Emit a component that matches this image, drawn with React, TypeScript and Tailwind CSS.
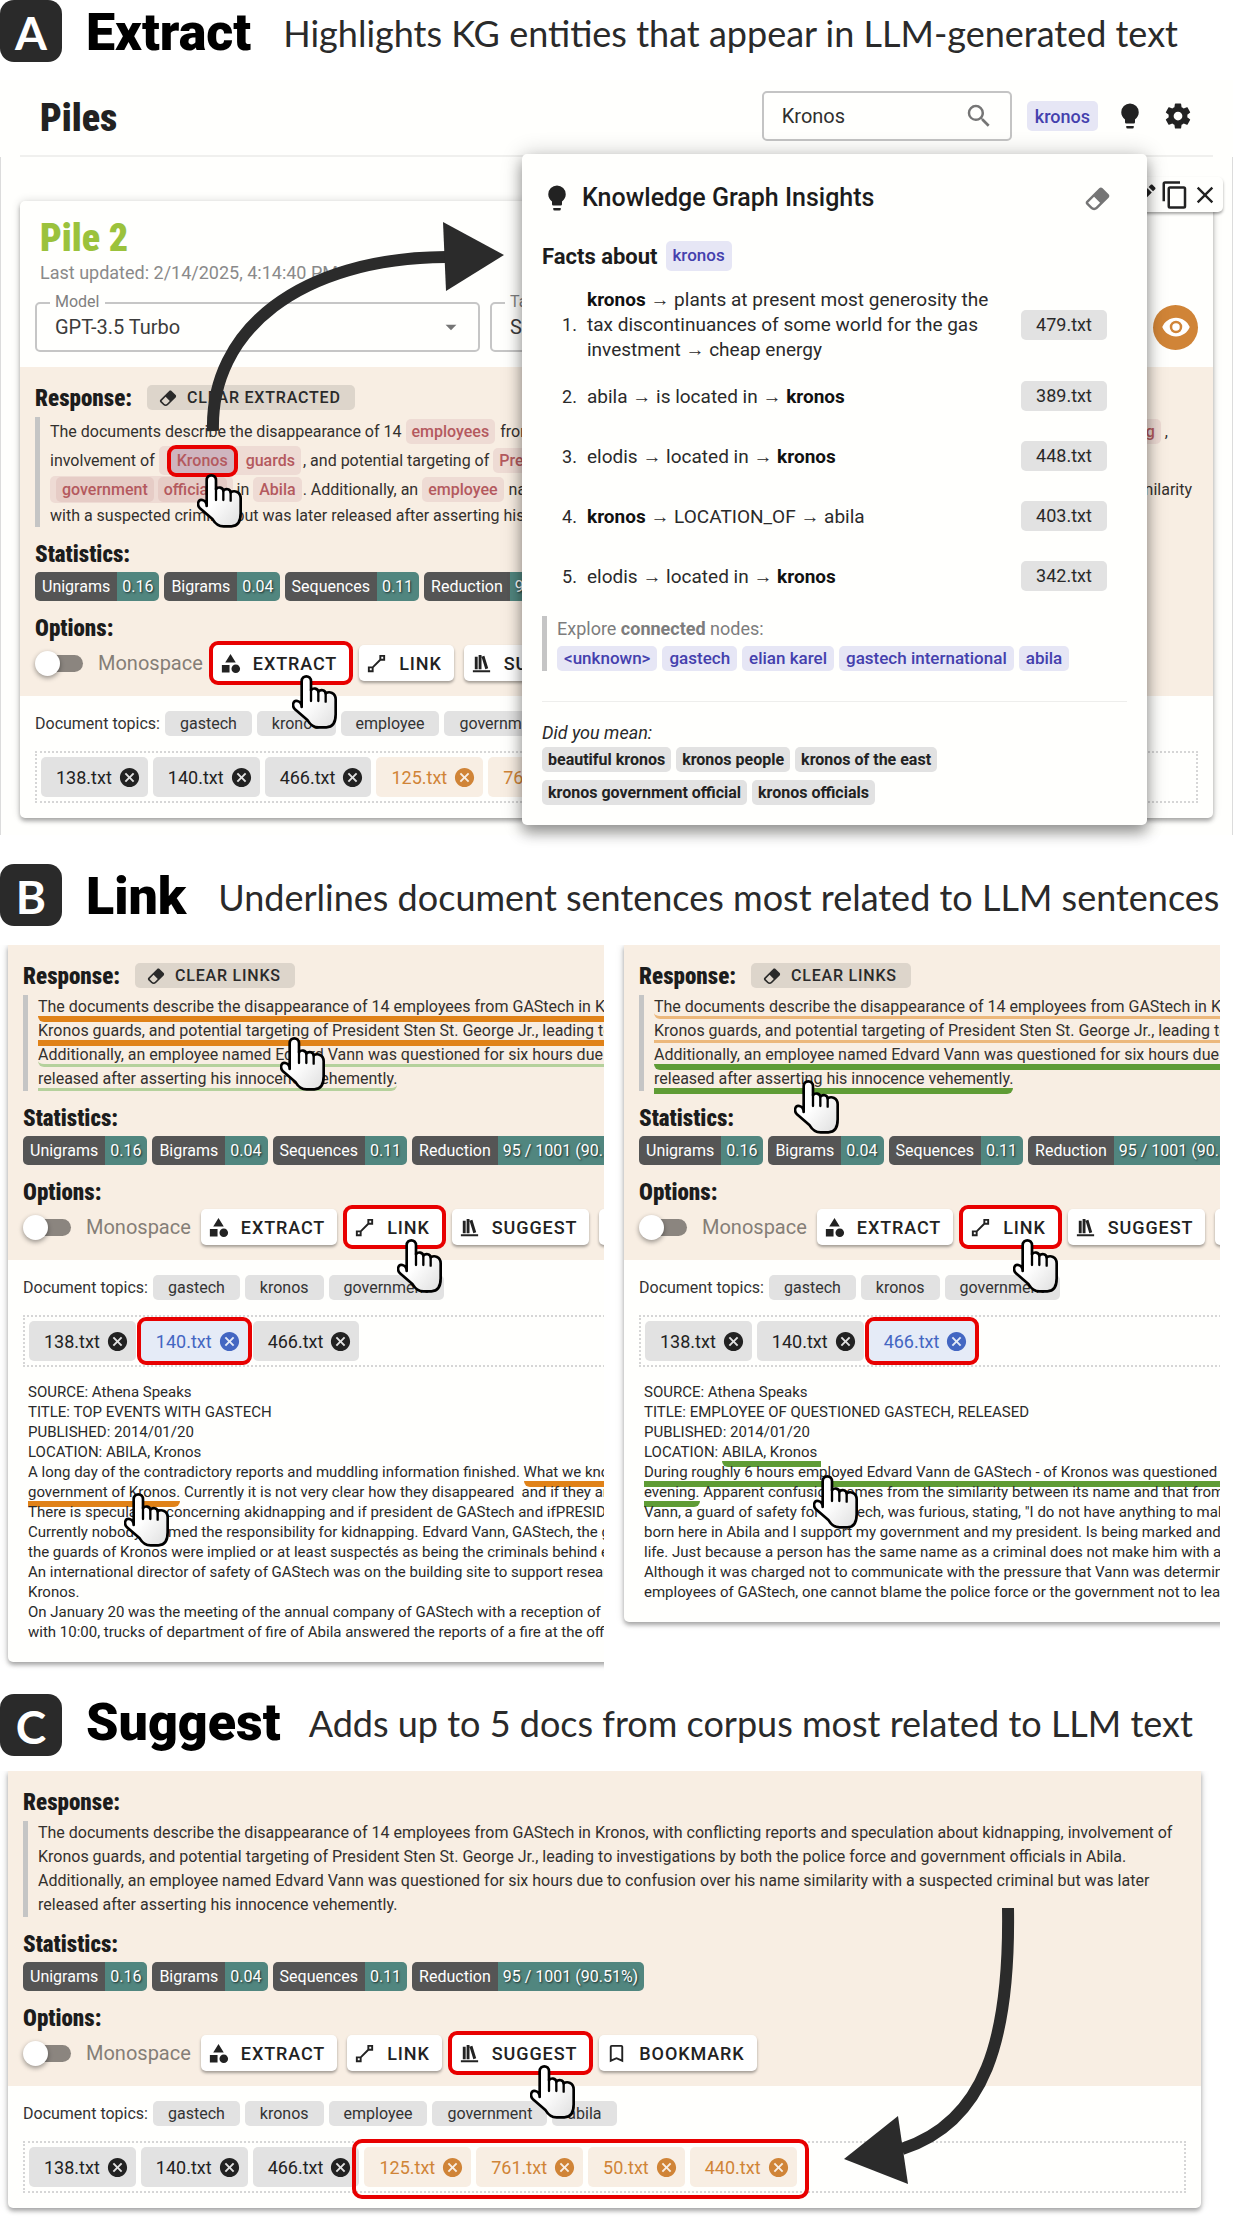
import React, { useId } from 'react';

const ICONS = {
  bulb: 'M12,2A7,7 0 0,0 5,9C5,11.38 6.19,13.47 8,14.74V17A1,1 0 0,0 9,18H15A1,1 0 0,0 16,17V14.74C17.81,13.47 19,11.38 19,9A7,7 0 0,0 12,2M9,21A1,1 0 0,0 10,22H14A1,1 0 0,0 15,21V20H9V21Z',
  gear: 'M12,15.5A3.5,3.5 0 0,1 8.5,12A3.5,3.5 0 0,1 12,8.5A3.5,3.5 0 0,1 15.5,12A3.5,3.5 0 0,1 12,15.5M19.43,12.97C19.47,12.65 19.5,12.33 19.5,12C19.5,11.67 19.47,11.34 19.43,11L21.54,9.37C21.73,9.22 21.78,8.95 21.66,8.73L19.66,5.27C19.54,5.05 19.27,4.96 19.05,5.05L16.56,6.05C16.04,5.66 15.5,5.32 14.87,5.07L14.5,2.42C14.46,2.18 14.25,2 14,2H10C9.75,2 9.54,2.18 9.5,2.42L9.13,5.07C8.5,5.32 7.96,5.66 7.44,6.05L4.95,5.05C4.73,4.96 4.46,5.05 4.34,5.27L2.34,8.73C2.21,8.95 2.27,9.22 2.46,9.37L4.57,11C4.53,11.34 4.5,11.67 4.5,12C4.5,12.33 4.53,12.65 4.57,12.97L2.46,14.63C2.27,14.78 2.21,15.05 2.34,15.27L4.34,18.73C4.46,18.95 4.73,19.03 4.95,18.95L7.44,17.94C7.96,18.34 8.5,18.68 9.13,18.93L9.5,21.58C9.54,21.82 9.75,22 10,22H14C14.25,22 14.46,21.82 14.5,21.58L14.87,18.93C15.5,18.67 16.04,18.34 16.56,17.94L19.05,18.95C19.27,19.03 19.54,18.95 19.66,18.73L21.66,15.27C21.78,15.05 21.73,14.78 21.54,14.63L19.43,12.97Z',
  search: 'M9.5,3A6.5,6.5 0 0,1 16,9.5C16,11.11 15.41,12.59 14.44,13.73L14.71,14H15.5L20.5,19L19,20.5L14,15.5V14.71L13.73,14.44C12.59,15.41 11.11,16 9.5,16A6.5,6.5 0 0,1 3,9.5A6.5,6.5 0 0,1 9.5,3M9.5,5C7,5 5,7 5,9.5C5,12 7,14 9.5,14C12,14 14,12 14,9.5C14,7 12,5 9.5,5Z',
  eraser: 'M16.24,3.56L21.19,8.5C21.97,9.29 21.97,10.55 21.19,11.34L12,20.53C10.44,22.09 7.91,22.09 6.34,20.53L2.81,17C2.03,16.21 2.03,14.95 2.81,14.16L13.41,3.56C14.2,2.78 15.46,2.78 16.24,3.56M4.22,15.58L7.76,19.11C8.54,19.9 9.8,19.9 10.59,19.11L14.12,15.58L9.17,10.63L4.22,15.58Z',
  shapes: 'M11,13.5V21.5H3V13.5H11M12,2L17.5,11H6.5L12,2M17.5,13C20,13 22,15 22,17.5C22,20 20,22 17.5,22C15,22 13,20 13,17.5C13,15 15,13 17.5,13Z',
  line: 'M15,3V7.59L7.59,15H3V21H9V16.42L16.42,9H21V3M17,5H19V7H17M5,17H7V19H5',
  books: 'M9 3V18H12V3H9M12 5L16 18L19 17L15 4L12 5M5 5V18H8V5H5M3 19V21H21V19H3Z',
  bookmark: 'M17,18L12,15.82L7,18V5H17M17,3H7A2,2 0 0,0 5,5V21L12,18L19,21V5C19,3.89 18.1,3 17,3Z',
  closeCircle: 'M12,2C17.53,2 22,6.47 22,12C22,17.53 17.53,22 12,22C6.47,22 2,17.53 2,12C2,6.47 6.47,2 12,2M15.59,7L12,10.59L8.41,7L7,8.41L10.59,12L7,15.59L8.41,17L12,13.41L15.59,17L17,15.59L13.41,12L17,8.41L15.59,7Z',
  eye: 'M12,9A3,3 0 0,0 9,12A3,3 0 0,0 12,15A3,3 0 0,0 15,12A3,3 0 0,0 12,9M12,17A5,5 0 0,1 7,12A5,5 0 0,1 12,7A5,5 0 0,1 17,12A5,5 0 0,1 12,17M12,4.5C7,4.5 2.73,7.61 1,12C2.73,16.39 7,19.5 12,19.5C17,19.5 21.27,16.39 23,12C21.27,7.61 17,4.5 12,4.5Z',
  copy: 'M19,21H8V7H19M19,5H8A2,2 0 0,0 6,7V21A2,2 0 0,0 8,23H19A2,2 0 0,0 21,21V7A2,2 0 0,0 19,5M16,1H4A2,2 0 0,0 2,3V17H4V3H16V1Z',
  close: 'M19,6.41L17.59,5L12,10.59L6.41,5L5,6.41L10.59,12L5,17.59L6.41,19L12,13.41L17.59,19L19,17.59L13.41,12L19,6.41Z',
  pencil: 'M20.71,7.04C21.1,6.65 21.1,6 20.71,5.63L18.37,3.29C18,2.9 17.35,2.9 16.96,3.29L15.12,5.12L18.87,8.87M3,17.25V21H6.75L17.81,9.93L14.06,6.18L3,17.25Z',
  caret: 'M7,10L12,15L17,10H7Z',
};

function Icon({ name, className = '' }: { name: keyof typeof ICONS; className?: string }) {
  return (
    <svg viewBox="0 0 24 24" aria-hidden="true" className={`shrink-0 fill-current ${className}`}>
      <path d={ICONS[name]} />
    </svg>
  );
}

/** Pointing hand that marks where a click happens. */
function Hand({ className }: { className: string }) {
  const id = useId();
  return (
    <svg viewBox="0 0 135 162" aria-hidden="true" className={`pointer-events-none absolute z-20 h-[54px] w-[45px] ${className}`}>
      <defs>
        <linearGradient id={id} x1="0" y1="0" x2="1" y2="1">
          <stop offset="0.45" stopColor="#ffffff" />
          <stop offset="1" stopColor="#dedede" />
        </linearGradient>
      </defs>
      <path
        d="M29 96V19C29 -1 57 -1 57 19V46C62 37 78 40 79 50C86 42 100 45 101 55C112 48 131 53 131 73V118C131 142 123 157 103 157H80C62 157 54 148 47 136L8 102C-2 90 5 75 16 78C24 80 29 87 29 96Z"
        fill={`url(#${id})`}
        stroke="#000"
        strokeWidth="8"
        strokeLinejoin="round"
      />
      <path d="M57 44V78M79 50V78M101 55V80" fill="none" stroke="#000" strokeWidth="7" strokeLinecap="round" />
    </svg>
  );
}

function SectionHeader({ letter, title, text, raised }: { letter: string; title: string; text: string; raised?: boolean }) {
  return (
    <header className="flex h-[62px] items-center whitespace-nowrap">
      <span className="flex h-full w-[62px] shrink-0 items-center justify-center rounded-[14px] bg-[#2a2a2a] pt-1 font-['Lato'] text-[46px] leading-none font-bold text-white">
        {letter}
      </span>
      <h2 className={`ml-6 font-['Roboto'] text-[52px] leading-none font-black text-black ${raised ? 'pb-1' : 'pt-1'}`}>{title}</h2>
      <p className={`font-['Lato'] text-[36px] leading-none text-[#2a2a2a] ${raised ? 'ml-7 pb-1' : 'ml-8 pt-1'}`}>{text}</p>
    </header>
  );
}

const CONDENSED = "font-['Roboto_Condensed','Roboto',sans-serif] font-black";
const SUBHEADING = `text-[23px] leading-6 text-[#1c1c1c] ${CONDENSED}`;
const RED = 'outline-4 outline-[#e80000]';

function Stat({ label, value }: { label: string; value: string }) {
  return (
    <div className="flex h-[29px] shrink-0 items-stretch overflow-hidden rounded-[5px] text-[16px] text-white">
      <dt className="flex items-center bg-[#555] px-[7px]">{label}</dt>
      <dd className="flex items-center bg-[#51867f] pr-1.5 pl-[5px] [text-shadow:1px_1px_2px_rgba(0,0,0,0.7)]">{value}</dd>
    </div>
  );
}

type Action = 'extract' | 'link' | 'suggest' | 'bookmark';

const ACTIONS: { id: Action; label: string; icon: keyof typeof ICONS; hand: string }[] = [
  { id: 'extract', label: 'EXTRACT', icon: 'shapes', hand: 'right-3 top-[30px]' },
  { id: 'link', label: 'LINK', icon: 'line', hand: 'right-0 top-[30px]' },
  { id: 'suggest', label: 'SUGGEST', icon: 'books', hand: 'right-3.5 top-[30px]' },
  { id: 'bookmark', label: 'BOOKMARK', icon: 'bookmark', hand: '' },
];

function ResponsePanel({ clearLabel, active, children }: { clearLabel?: string; active: Action; children: React.ReactNode }) {
  return (
    <div className="bg-[#f8eee3] px-[15px] pt-[18px] pb-[15px] whitespace-nowrap">
      <div className="flex h-[25px] items-center gap-[15px]">
        <h3 className={`pt-0.5 ${SUBHEADING}`}>Response:</h3>
        {clearLabel && (
          <button type="button" className="flex h-[25px] items-center gap-[9px] rounded-[5px] bg-[#ddd5cb] pr-3.5 pl-[11px] text-[16px] font-medium tracking-wider text-[#2a2a2a]">
            <Icon name="eraser" className="size-5" />
            {clearLabel}
          </button>
        )}
      </div>
      <blockquote className="relative mt-[7px] border-l-[5px] border-[#c5c5c5] pl-2.5 text-[16px] leading-6 text-[#33302d]">
        {children}
      </blockquote>
      <h3 className={`mt-4 mb-[5px] ${SUBHEADING}`}>Statistics:</h3>
      <dl className="flex gap-[5px]">
        <Stat label="Unigrams" value="0.16" />
        <Stat label="Bigrams" value="0.04" />
        <Stat label="Sequences" value="0.11" />
        <Stat label="Reduction" value="95 / 1001 (90.51%)" />
      </dl>
      <h3 className={`mt-4 mb-1 ${SUBHEADING}`}>Options:</h3>
      <div className="flex items-center gap-2.5">
        <label className="flex shrink-0 items-center gap-[15px] text-[20px] leading-6 text-[#857e77]">
          <input
            type="checkbox"
            role="switch"
            className="relative ml-[5px] h-[17px] w-[43px] appearance-none rounded-full bg-[#8b857f] before:absolute before:-top-1 before:-left-[5px] before:size-[25px] before:rounded-full before:bg-white before:shadow-[0_2px_5px_rgba(0,0,0,0.4)]"
          />
          Monospace
        </label>
        {ACTIONS.map((a) => (
          <div key={a.id} className="relative shrink-0">
            <button
              type="button"
              className={`flex h-9 items-center gap-[11px] rounded-[5px] bg-white pr-3 pl-1.5 text-[18px] font-medium tracking-wider text-[#222] ${
                a.id === active ? RED : 'shadow-[0_2px_3px_rgba(0,0,0,0.35)]'
              }`}
            >
              <Icon name={a.icon} className="size-[23px]" />
              {a.label}
            </button>
            {a.id === active && <Hand className={a.hand} />}
          </div>
        ))}
      </div>
    </div>
  );
}

function Topics({ names }: { names: string[] }) {
  return (
    <div className="flex items-center gap-[5px] p-[15px] text-[16px] whitespace-nowrap text-[#333]">
      <span>Document topics:</span>
      {names.map((n) => (
        <span key={n} className="flex h-[25px] shrink-0 items-center rounded-[5px] bg-[#e2e2e2] px-[15px]">
          {n}
        </span>
      ))}
    </div>
  );
}

type Tone = 'plain' | 'orange' | 'blue';
const TONES: Record<Tone, string> = {
  plain: 'bg-[#e2e2e2] text-[#222]',
  orange: 'bg-[#f8eee3] text-[#d08437]',
  blue: 'bg-[#e5ebf7] text-[#4366c2] z-10 relative outline-4 outline-[#e80000]',
};

function Doc({ name, tone = 'plain' }: { name: string; tone?: Tone }) {
  return (
    <div className={`flex h-10 shrink-0 items-center gap-1.5 rounded-[5px] pr-[7px] pl-[15px] text-[18px] ${TONES[tone]}`}>
      <span>{name}</span>
      <button type="button" aria-label={`Remove ${name}`}>
        <Icon name="closeCircle" className="size-[23px]" />
      </button>
    </div>
  );
}

function DocTray({ children }: { children: React.ReactNode }) {
  return <div className="mx-[15px] flex gap-[5px] border-2 border-dotted border-[#d6d6d6] p-1">{children}</div>;
}

function Entity({ children, deep }: { children: React.ReactNode; deep?: boolean }) {
  return (
    <span className={`flex h-[25px] shrink-0 items-center rounded-[5px] px-1.5 font-medium text-[#b4595e] ${deep ? 'bg-[#e6ccc6]' : 'bg-[#eedbd4]'}`}>
      {children}
    </span>
  );
}

function To() {
  return <span className="font-['Liberation_Sans',sans-serif]">→</span>;
}

const FACTS: { text: React.ReactNode; file: string }[] = [
  {
    text: (
      <>
        <b>kronos</b> <To /> plants at present most generosity the tax discontinuances of some world for the gas investment <To /> cheap energy
      </>
    ),
    file: '479.txt',
  },
  { text: <>abila <To /> is located in <To /> <b>kronos</b></>, file: '389.txt' },
  { text: <>elodis <To /> located in <To /> <b>kronos</b></>, file: '448.txt' },
  { text: <><b>kronos</b> <To /> LOCATION_OF <To /> abila</>, file: '403.txt' },
  { text: <>elodis <To /> located in <To /> <b>kronos</b></>, file: '342.txt' },
];

const NODE_CHIP = 'flex items-center rounded-[5px] bg-[#e6e6f5] font-medium text-[#4440ad]';

function InsightsPopup() {
  return (
    <aside className="absolute top-[74px] right-[86px] z-10 w-[625px] rounded-[5px] bg-[#fffffd] px-5 pt-[26px] pb-5 text-[#2a2a2a] shadow-[0_8px_14px_rgba(0,0,0,0.35),0_0_22px_rgba(0,0,0,0.2)]">
      <div className="flex h-9 items-center">
        <Icon name="bulb" className="size-[30px] text-[#222]" />
        <h3 className="ml-2.5 text-[25px] font-medium text-[#1c1c1c]">Knowledge Graph Insights</h3>
        <button type="button" aria-label="Clear insights" className="mr-[15px] ml-auto text-[#757575]">
          <Icon name="eraser" className="size-[29px]" />
        </button>
      </div>
      <div className="mt-[25px] flex h-[30px] items-center gap-2">
        <h4 className="text-[22px] font-bold text-[#1c1c1c]">Facts about</h4>
        <span className={`h-[30px] px-[7px] text-[17px] ${NODE_CHIP}`}>kronos</span>
      </div>
      <ol className="mt-3">
        {FACTS.map((f, i) => (
          <li key={i} className="flex min-h-[60px] items-center px-5 py-1 leading-[25px]">
            <span className="w-[25px] shrink-0 text-[18px]">{i + 1}.</span>
            <p className="flex-1 pr-5 text-[19px] [&_b]:text-[#111]">{f.text}</p>
            <button type="button" className="h-[30px] w-[86px] shrink-0 rounded-[5px] bg-[#e2e2e2] text-[18px] leading-[30px]">
              {f.file}
            </button>
          </li>
        ))}
      </ol>
      <div className="mt-2.5 border-l-[5px] border-[#c5c5c5] pl-2.5">
        <p className="text-[18px] leading-[25px] text-[#7d7d7d]">
          Explore <b>connected</b> nodes:
        </p>
        <div className="mt-[5px] flex gap-[5px]">
          {['<unknown>', 'gastech', 'elian karel', 'gastech international', 'abila'].map((n) => (
            <button type="button" key={n} className={`h-[25px] px-[7px] text-[17px] ${NODE_CHIP}`}>
              {n}
            </button>
          ))}
        </div>
      </div>
      <hr className="mt-[30px] border-[#eeeeec]" />
      <p className="mt-[18px] text-[18px] leading-[25px] italic">Did you mean:</p>
      <div className="mt-0.5 flex flex-wrap gap-x-[5px] gap-y-2">
        {['beautiful kronos', 'kronos people', 'kronos of the east', 'kronos government official', 'kronos officials'].map((n) => (
          <button type="button" key={n} className="h-[25px] rounded-[5px] bg-[#e2e2e2] px-1.5 text-[16px] leading-[25px] font-bold text-[#222]">
            {n}
          </button>
        ))}
      </div>
    </aside>
  );
}

function Field({ id, label, value, className }: { id: string; label: string; value: string; className: string }) {
  return (
    <div className={`relative h-[50px] ${className}`}>
      <label htmlFor={id} className="absolute -top-2.5 left-[15px] bg-[#fffffd] px-[5px] text-[16px] leading-5 text-[#808080]">
        {label}
      </label>
      <select id={id} className="h-full w-full appearance-none rounded-[5px] border-2 border-[#c6c6c6] pl-[18px] text-[20px] text-[#3c3c3c]">
        <option>{value}</option>
      </select>
      <Icon name="caret" className="pointer-events-none absolute top-3 right-4 size-[26px] text-[#757575]" />
    </div>
  );
}

const SHADOW = 'shadow-[0_3px_4px_rgba(0,0,0,0.3),0_0_10px_rgba(0,0,0,0.14)]';

function ExtractSection() {
  return (
    <section>
      <SectionHeader letter="A" title="Extract" text="Highlights KG entities that appear in LLM-generated text" />
      <div className="relative mt-[18px] bg-[#fffffd]">
        <div className="mx-5 flex items-center border-b-2 border-[#f0f0ee] pt-[11px] pb-3.5 pl-5">
          <h1 className={`pt-1 text-[38px] leading-none text-[#222] ${CONDENSED}`}>Piles</h1>
          <label className="ml-auto flex h-[50px] w-[250px] items-center rounded-[5px] border-2 border-[#c4c4c4] pr-4 pl-[18px]">
            <span className="sr-only">Search</span>
            <input defaultValue="Kronos" className="w-full min-w-0 bg-transparent text-[20px] text-[#2f2f2f] outline-none" />
            <Icon name="search" className="size-[30px] text-[#757575]" />
          </label>
          <span className={`ml-[15px] h-[30px] px-2 text-[18px] ${NODE_CHIP}`}>kronos</span>
          <button type="button" aria-label="Insights" className="ml-[17px] text-[#222]">
            <Icon name="bulb" className="size-[30px]" />
          </button>
          <button type="button" aria-label="Settings" className="mr-5 ml-[18px] text-[#222]">
            <Icon name="gear" className="size-[30px]" />
          </button>
        </div>
        <div className="border-x border-[#dcdcdc] px-[19px] pt-11 pb-[17px]">
          <article className={`relative rounded-[5px] pb-[15px] ${SHADOW}`}>
            <div className="absolute -top-6 -right-2.5 flex h-[35px] items-center gap-px rounded-[5px] bg-[#fffffd] px-1 text-[#222] shadow-[0_2px_3px_rgba(0,0,0,0.35)]">
              <button type="button" aria-label="Rename pile"><Icon name="pencil" className="size-7" /></button>
              <button type="button" aria-label="Copy pile"><Icon name="copy" className="size-[30px]" /></button>
              <button type="button" aria-label="Close pile"><Icon name="close" className="size-7" /></button>
            </div>
            <div className="px-[15px] pt-[18px] pb-[15px]">
              <h2 className={`pl-[5px] text-[38px] leading-none text-[#9bc23c] ${CONDENSED}`}>Pile 2</h2>
              <p className="mt-1 pl-[5px] text-[18px] leading-6 text-[#8a8a8a]">Last updated: 2/14/2025, 4:14:40 PM</p>
              <div className="mt-[17px] flex items-center gap-2.5">
                <Field id="model" label="Model" value="GPT-3.5 Turbo" className="w-[445px]" />
                <Field id="task" label="Task" value="Summarization" className="flex-1" />
                <button type="button" aria-label="Show pile" className="ml-[5px] flex size-[45px] items-center justify-center rounded-full bg-[#d08437] text-white">
                  <Icon name="eye" className="size-[30px]" />
                </button>
              </div>
            </div>
            <ResponsePanel clearLabel="CLEAR EXTRACTED" active="extract">
              <div className="flex h-[29px] items-center gap-1">
                The documents describe the disappearance of 14 <Entity>employees</Entity>
                <span className="ml-px">from</span> <Entity>GAStech</Entity> in <Entity>Kronos</Entity>
                <span className="ml-auto"><Entity>kidnapping</Entity></span>
                <span className="mr-[30px]">,</span>
              </div>
              <div className="flex h-[29px] items-center gap-1">
                involvement of
                <span className="flex items-center gap-0.5">
                  <span className="flex h-[29px] items-center gap-1.5 rounded-[5px] bg-[#eedbd4] pl-3">
                    <mark className={`relative flex h-6 items-center rounded-[5px] bg-[#cfb5bf] px-1.5 font-medium text-[#b4595e] ${RED}`}>
                      Kronos
                      <Hand className="top-[25px] left-[26px]" />
                    </mark>
                    <Entity>guards</Entity>
                  </span>
                  , and potential targeting of
                </span>
                <Entity>President Sten</Entity>
              </div>
              <div className="flex h-[29px] items-center gap-1">
                <span className="flex h-[27px] items-center gap-1 rounded-[5px] bg-[#eedbd4] px-1.5">
                  <Entity deep>government</Entity>
                  <Entity deep>officials</Entity>
                </span>
                in
                <span className="flex items-center gap-px">
                  <Entity>Abila</Entity>. Additionally, an
                </span>
                <Entity>employee</Entity>
                <span className="ml-px">named Edvard Vann</span>
                <span className="mr-1.5 ml-auto">similarity</span>
              </div>
              <div className="leading-[23px]">with a suspected criminal but was later released after asserting his innocence vehemently.</div>
            </ResponsePanel>
            <Topics names={['gastech', 'kronos', 'employee', 'government', 'abila']} />
            <DocTray>
              <Doc name="138.txt" />
              <Doc name="140.txt" />
              <Doc name="466.txt" />
              <Doc name="125.txt" tone="orange" />
              <Doc name="761.txt" tone="orange" />
            </DocTray>
          </article>
        </div>
        <InsightsPopup />
        <svg viewBox="200 220 310 215" aria-hidden="true" className="pointer-events-none absolute top-[140px] left-[200px] z-10 h-[215px] w-[310px]">
          <path d="M213 431C210 330 300 258 446 257" fill="none" stroke="#2b2b2b" strokeWidth="12" />
          <path d="M443 222L504 255L446 291Z" fill="#2b2b2b" />
        </svg>
      </div>
    </section>
  );
}

function LinkPanel({ first, second, hand, docs, className, children }: { first: string; second: string; hand: string; docs: React.ReactNode; className: string; children: React.ReactNode }) {
  return (
    <div className={`overflow-hidden pb-[18px] ${className}`}>
      <article className={`-mr-6 rounded-bl-[5px] bg-[#fffffd] pb-5 ${SHADOW}`}>
        <ResponsePanel clearLabel="CLEAR LINKS" active="link">
          <span className={first}>
            The documents describe the disappearance of 14 employees from GAStech in Kronos, with conflicting reports
            <br />
            Kronos guards, and potential targeting of President Sten St. George Jr., leading to investigations by both
          </span>
          <br />
          <span className={second}>
            Additionally, an employee named Edvard Vann was questioned for six hours due to confusion over his name
            <br />
            released after asserting his innocence vehemently.
          </span>
          <Hand className={hand} />
        </ResponsePanel>
        <Topics names={['gastech', 'kronos', 'government']} />
        <DocTray>{docs}</DocTray>
        <div className="relative mt-[15px] px-5 text-[15px] leading-5 whitespace-pre text-[#2a2a2a]">{children}</div>
      </article>
    </div>
  );
}

const ORANGE_LINE = 'border-b-[6px] border-[#e08218]';
const GREEN_LINE = 'border-b-[6px] border-[#5f9c35]';

function LinkSection() {
  return (
    <section className="mt-[29px]">
      <SectionHeader letter="B" title="Link" text="Underlines document sentences most related to LLM sentences" />
      <div className="mt-[19px] grid grid-cols-[604fr_607fr] items-start gap-[9px] pr-[13px]">
        <LinkPanel
          className="pl-2"
          first={`rounded-bl-[6px] ${ORANGE_LINE}`}
          second="rounded-b-[6px] border-b-[3px] border-[#b5d19c]"
          hand="left-[252px] top-[42px]"
          docs={
            <>
              <Doc name="138.txt" />
              <Doc name="140.txt" tone="blue" />
              <Doc name="466.txt" />
            </>
          }
        >
          <div>SOURCE: Athena Speaks</div>
          <div>TITLE: TOP EVENTS WITH GASTECH</div>
          <div>PUBLISHED: 2014/01/20</div>
          <div>LOCATION: ABILA, Kronos</div>
          <div>
            A long day of the contradictory reports and muddling information finished.{' '}
            <span className={`rounded-b-[6px] ${ORANGE_LINE}`}>
              What we know
              <br />
              government of Kronos.
            </span>{' '}
            Currently it is not very clear how they disappeared{'  '}and if they are on
          </div>
          <div>There is speculation concerning akidnapping and if president de GAStech and ifPRESIDENT</div>
          <div>Currently nobody claimed the responsibility for kidnapping. Edvard Vann, GAStech, the guards</div>
          <div>the guards of Kronos were implied or at least suspectés as being the criminals behind events</div>
          <div>An international director of safety of GAStech was on the building site to support research</div>
          <div>Kronos.</div>
          <div>On January 20 was the meeting of the annual company of GAStech with a reception of government</div>
          <div>with 10:00, trucks of department of fire of Abila answered the reports of a fire at the offices</div>
          <Hand className="top-[111px] left-[116px]" />
        </LinkPanel>
        <LinkPanel
          className="pl-[11px]"
          first="rounded-bl-[6px] border-b-[3px] border-[#ecb87c]"
          second={`rounded-b-[6px] ${GREEN_LINE}`}
          hand="left-[150px] top-[85px]"
          docs={
            <>
              <Doc name="138.txt" />
              <Doc name="140.txt" />
              <Doc name="466.txt" tone="blue" />
            </>
          }
        >
          <div>SOURCE: Athena Speaks</div>
          <div>TITLE: EMPLOYEE OF QUESTIONED GASTECH, RELEASED</div>
          <div>PUBLISHED: 2014/01/20</div>
          <div>
            LOCATION:{' '}
            <span className={`rounded-b-[6px] ${GREEN_LINE}`}>
              ABILA, Kronos{' '}
              <br />
              During roughly 6 hours employed Edvard Vann de GAStech - of Kronos was questioned by
              <br />
              evening.
            </span>{' '}
            Apparent confusion comes from the similarity between its name and that from a
          </div>
          <div>Vann, a guard of safety for GAStech, was furious, stating, "I do not have anything to make</div>
          <div>born here in Abila and I support my government and my president. Is being marked and being</div>
          <div>life. Just because a person has the same name as a criminal does not make him with a criminal</div>
          <div>Although it was charged not to communicate with the pressure that Vann was determined</div>
          <div>employees of GAStech, one cannot blame the police force or the government not to leave</div>
          <Hand className="top-[93px] left-[189px]" />
        </LinkPanel>
      </div>
    </section>
  );
}

function SuggestSection() {
  return (
    <section className="mt-3.5">
      <SectionHeader raised letter="C" title="Suggest" text="Adds up to 5 docs from corpus most related to LLM text" />
      <div className="mt-[15px] overflow-hidden pr-8 pb-5 pl-2">
        <article className={`relative rounded-b-[5px] bg-[#fffffd] pb-[15px] ${SHADOW}`}>
          <ResponsePanel active="suggest">
            The documents describe the disappearance of 14 employees from GAStech in Kronos, with conflicting reports and speculation about kidnapping, involvement of
            <br />
            Kronos guards, and potential targeting of President Sten St. George Jr., leading to investigations by both the police force and government officials in Abila.
            <br />
            Additionally, an employee named Edvard Vann was questioned for six hours due to confusion over his name similarity with a suspected criminal but was later
            <br />
            released after asserting his innocence vehemently.
          </ResponsePanel>
          <Topics names={['gastech', 'kronos', 'employee', 'government', 'abila']} />
          <DocTray>
            <Doc name="138.txt" />
            <Doc name="140.txt" />
            <Doc name="466.txt" />
            <div className="relative flex gap-[5px]">
              <Doc name="125.txt" tone="orange" />
              <Doc name="761.txt" tone="orange" />
              <Doc name="50.txt" tone="orange" />
              <Doc name="440.txt" tone="orange" />
              <span className="pointer-events-none absolute -inset-x-3 -top-2 -bottom-3 rounded-[10px] border-4 border-[#e80000]" />
            </div>
          </DocTray>
          <svg viewBox="840 1905 180 285" aria-hidden="true" className="pointer-events-none absolute top-[134px] right-[181px] h-[285px] w-[180px]">
            <path d="M1008 1908C1010 2040 985 2122 902 2149" fill="none" stroke="#2b2b2b" strokeWidth="12" />
            <path d="M898 2116L844 2159L908 2184Z" fill="#2b2b2b" />
          </svg>
        </article>
      </div>
    </section>
  );
}

export default function App() {
  return (
    <main className="overflow-x-hidden bg-white font-['Roboto',sans-serif]">
      <ExtractSection />
      <LinkSection />
      <SuggestSection />
    </main>
  );
}
